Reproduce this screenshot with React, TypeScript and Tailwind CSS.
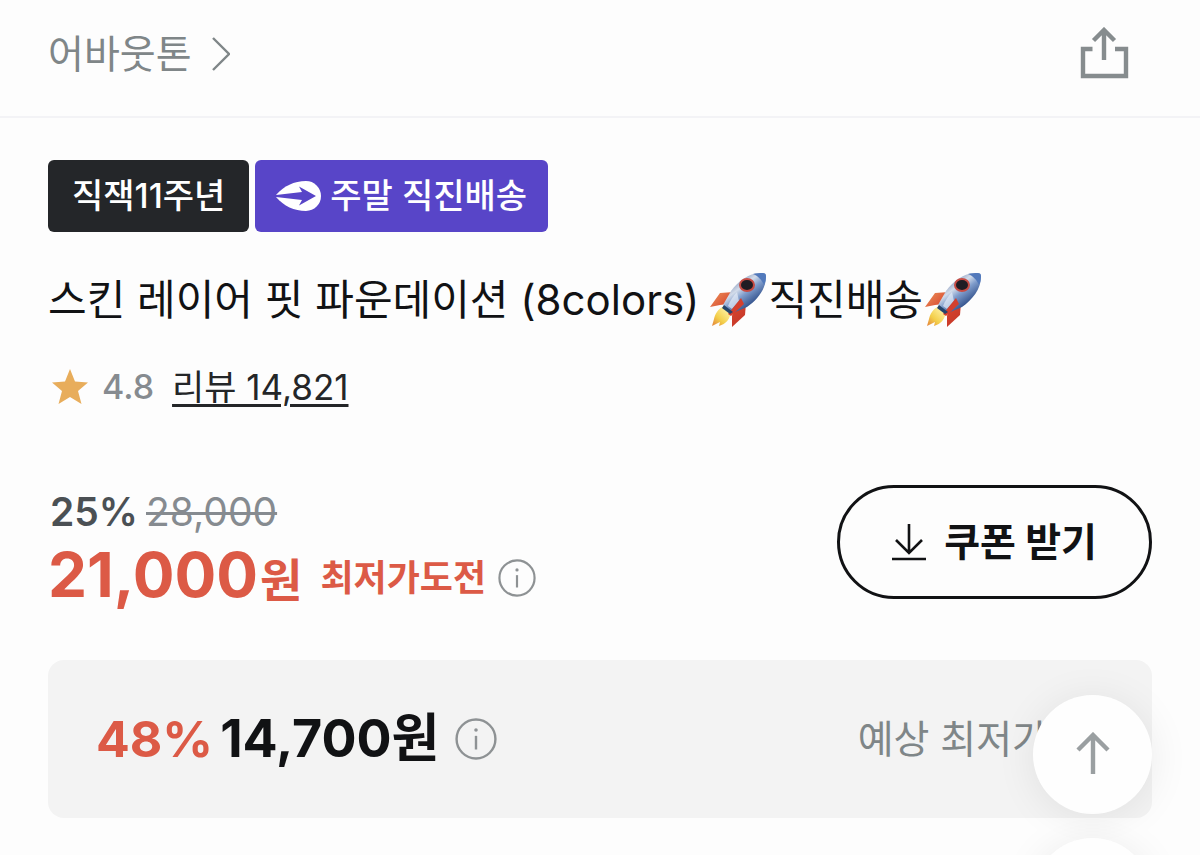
import React from "react";

const Rocket = () => (
  <svg viewBox="0 0 58 54" className="h-[54px] w-[58px] shrink-0" role="img" aria-label="rocket">
    <defs>
      <linearGradient id="hull" x1="22" y1="8" x2="40" y2="32" gradientUnits="userSpaceOnUse">
        <stop offset="0" stopColor="#7d8fb5" />
        <stop offset="0.35" stopColor="#d3dcea" />
        <stop offset="0.6" stopColor="#7f9ccb" />
        <stop offset="1" stopColor="#36558f" />
      </linearGradient>
      <linearGradient id="fin" x1="4" y1="20" x2="30" y2="48" gradientUnits="userSpaceOnUse">
        <stop offset="0" stopColor="#e98a55" />
        <stop offset="0.5" stopColor="#d9472f" />
        <stop offset="1" stopColor="#c93a2a" />
      </linearGradient>
      <linearGradient id="flame" x1="18" y1="36" x2="3" y2="52" gradientUnits="userSpaceOnUse">
        <stop offset="0" stopColor="#fff3a8" />
        <stop offset="0.6" stopColor="#f3cf4a" />
        <stop offset="1" stopColor="#e58a3c" />
      </linearGradient>
    </defs>
    <path d="M24 19 10 20 0 34l10-2 8-1z" fill="url(#fin)" />
    <path d="M36 30 35 42 22 54l0-11 2-8z" fill="url(#fin)" />
    <path d="M14 33C8 36 5 41 4 46l-2 7 8-4-1 4c7-2 11-7 12-14z" fill="url(#flame)" />
    <path d="M53 0C41-1 29 7 21 18l-8 14 10 8 14-6C47 27 56 16 56 4 56 1 55 0 53 0z" fill="url(#hull)" />
    <path d="M53 0c-4 0-7 0-10 1 5 2 9 6 11 11 2-4 2-8 2-9 0-2-1-3-3-3z" fill="#5279bb" />
    <path d="M27 19c-4 4-7 9-9 14l4 3 7-8z" fill="#e5edf8" opacity="0.7" />
    <path d="M31 25 18 41l3 2 13-12z" fill="#d43f2e" />
    <path d="m14 32 9 7-3 2-8-6z" fill="#25456c" />
    <ellipse cx="37" cy="12" rx="8" ry="7" fill="#c74b43" />
    <ellipse cx="37" cy="12" rx="6" ry="5" fill="#201c23" />
  </svg>
);

const InfoIcon = ({ className }: { className: string }) => (
  <svg viewBox="0 0 40 40" className={className} fill="none" stroke="#8e9294" strokeWidth="2.3">
    <circle cx="20" cy="20" r="18.5" />
    <path d="M20 17v13" />
    <circle cx="20" cy="11.5" r="1.7" fill="#8e9294" stroke="none" />
  </svg>
);

const App = () => {
  return (
    <div className="bg-[#fdfdfd] min-h-screen text-[#111214] font-['Inter','Noto_Sans_CJK_KR',sans-serif]">
      {/* Brand header */}
      <header className="flex items-center justify-between border-b-2 border-[#f3f3f6] pl-12 pr-[71px] h-[118px] pb-2">
        <a href="#brand" className="flex items-center gap-5 text-[39px] leading-[56px] text-[#7f8688]">
          어바웃톤
          <svg viewBox="0 0 18 34" className="w-[18px] h-[34px]" fill="none" stroke="currentColor" strokeWidth="2.4">
            <path d="M1 1l16 16L1 33" />
          </svg>
        </a>
        <button aria-label="공유하기" className="text-[#868c8e]">
          <svg viewBox="0 0 50 54" className="w-[50px] h-[54px]" fill="none" stroke="currentColor" strokeWidth="4.4">
            <path d="M13.500 22H4v27h43V22H36" />
            <path d="M25 33V3M14.500 13.500 25 3l10.500 10.500" />
          </svg>
        </button>
      </header>

      <main className="px-12 pt-[42px]">
        {/* Badges */}
        <div className="flex gap-[6px] text-white text-[34px] leading-[72px] font-medium">
          <span className="rounded-md bg-[#242629] px-6">직잭11주년</span>
          <span className="flex items-center gap-2 rounded-md bg-[#5845c8] px-[21px]">
            <svg viewBox="0 0 46 32" className="w-[46px] h-8">
              <path d="M0 15C8 6 18 1 30 1a15 15 0 0 1 0 30C18 31 8 26 0 17z" fill="white" />
              <path d="M0 15 26 12 23 6.500 40 16 23 25.500 26 20 0 17z" fill="#5845c8" />
            </svg>
            주말 직진배송
          </span>
        </div>

        <h1 className="mt-10 flex items-center text-[42px] leading-[56px]">
          <span className="mr-[11px]">스킨 레이어 핏 파운데이션 (8colors)</span>
          <Rocket />
          <span className="mr-[2px]">직진배송</span>
          <Rocket />
        </h1>

        {/* Rating */}
        <div className="mt-8 flex items-center text-[35px] leading-[54px]">
          <svg viewBox="0 0 36 36" className="ml-1 w-9 h-9" fill="#e8ad5b">
            <path d="M18 0l5 12.500 13 1-10 8.500 3.500 13L18 28 6.500 35 10 22 0 13.500l13-1z" />
          </svg>
          <span className="ml-[14px] text-[34px] font-medium text-[#868b90]">4.8</span>
          <a href="#reviews" className="ml-[18px] underline decoration-[3px] underline-offset-4 text-[#242628]">
            리뷰 14,821
          </a>
        </div>

        {/* Price */}
        <section className="mt-[71px] flex items-start justify-between">
          <div>
            <p className="flex gap-2 pl-[2px] text-[39px] leading-[54px]">
              <span className="font-semibold text-[#4b5054]">25%</span>
              <del className="text-[#868b90] decoration-[3px]">28,000</del>
            </p>
            <div className="flex items-center leading-[72px] text-[#dc5a46]">
              <strong className="text-[62px] font-bold">
                21,000<span className="ml-[2px] text-[46px]">원</span>
              </strong>
              <span className="ml-[18px] text-[36px] font-bold">최저가도전</span>
              <button aria-label="최저가도전 안내" className="ml-3">
                <InfoIcon className="w-[38px] h-[38px]" />
              </button>
            </div>
          </div>
          <button className="flex h-[114px] items-center gap-[18px] rounded-full border-[3px] border-[#111214] px-[52px] text-[39px] font-bold">
            <svg viewBox="0 0 34 38" className="w-[34px] h-[38px]" fill="none" stroke="currentColor" strokeWidth="2.6">
              <path d="M17 1v29M4 17l13 13 13-13M0 36h34" />
            </svg>
            쿠폰 받기
          </button>
        </section>

        {/* Expected lowest price */}
        <section className="mt-11 flex h-[158px] items-center justify-between rounded-2xl bg-[#f3f3f3] px-12">
          <div className="flex items-center text-[52px] font-bold">
            <span className="text-[50px] text-[#dc5a46]">48%</span>
            <span className="ml-[7px]">14,700원</span>
            <button aria-label="예상 최저가 안내" className="ml-4">
              <InfoIcon className="w-[42px] h-[42px]" />
            </button>
          </div>
          <button className="flex items-center gap-[22px] text-[39px] text-[#7f8688]">
            예상 최저가
            <svg viewBox="0 0 34 34" className="w-[34px] h-[34px]" fill="none" stroke="currentColor" strokeWidth="3">
              <path d="M5 11l12 12 12-12" />
            </svg>
          </button>
        </section>
      </main>

      {/* Floating buttons */}
      <div className="fixed right-12 -bottom-[102px] flex flex-col gap-6">
        <button
          aria-label="맨 위로"
          className="flex h-[119px] w-[119px] items-center justify-center rounded-full bg-[#fefefe] pb-1 text-[#9a9fa1] shadow-[0_4px_40px_rgba(0,0,0,0.08)]"
        >
          <svg viewBox="0 0 34 42" className="w-[34px] h-[42px]" fill="none" stroke="currentColor" strokeWidth="4.4">
            <path d="M17 42V3M2 18 17 3l15 15" />
          </svg>
        </button>
        <button
          aria-label="더보기"
          className="h-[119px] w-[119px] rounded-full bg-[#fefefe] shadow-[0_4px_40px_rgba(0,0,0,0.08)]"
        />
      </div>
    </div>
  );
};

export default App;
